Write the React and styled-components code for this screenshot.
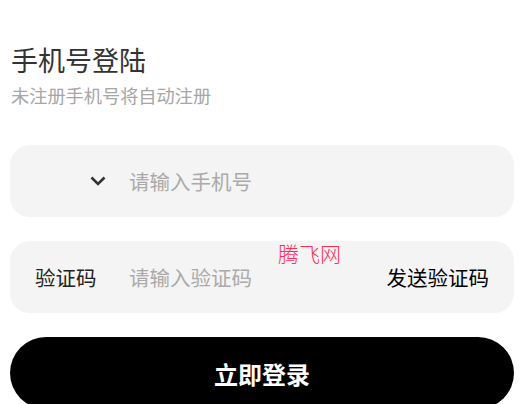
import React from 'react';
import styled, { createGlobalStyle } from 'styled-components';

const GlobalStyle = createGlobalStyle`
    body {
        margin: 0;
        background: #fff;
        font-family: "Noto Sans CJK SC", "Noto Sans", sans-serif;
    }
`

const Page = styled.div`
    padding: 42px 9px 0 10px;
    display: flex;
    flex-direction: column;
`

const Title = styled.h1`
    margin: 0;
    font-size: 27px;
    line-height: 36px;
    font-weight: 400;
    color: #333;
    padding-left: 1px;
`

const Subtitle = styled.p`
    margin: 4px 0 0;
    font-size: 18.2px;
    line-height: 26px;
    color: #a6a6a6;
    padding-left: 1px;
`

const Field = styled.div`
    position: relative;
    display: flex;
    align-items: center;
    height: 72px;
    margin-top: ${p => p.$top}px;
    background: #f4f4f4;
    border-radius: 20px;
`

const Lead = styled.div`
    width: 119px;
    flex-shrink: 0;
    display: flex;
    align-items: center;
    justify-content: ${p => p.$right ? 'flex-end' : 'flex-start'};
    padding: ${p => p.$right ? '0 23px 0 0' : '0 0 0 25px'};
    box-sizing: border-box;
    font-size: 20.5px;
    color: #222;
`

const Input = styled.input`
    flex: 1;
    min-width: 0;
    border: none;
    outline: none;
    background: transparent;
    font-family: inherit;
    font-size: 20.5px;
    color: #333;
    padding: 0;
    &::placeholder {
        color: #aaa;
    }
`

const SendCode = styled.span`
    padding-right: 25px;
    font-size: 20.5px;
    color: #000;
`

const Watermark = styled.span`
    position: absolute;
    left: 268px;
    top: -2px;
    font-size: 21px;
    line-height: 28px;
    font-weight: 300;
    color: #ff2d55;
`

const Submit = styled.button`
    margin-top: 24px;
    height: 72px;
    border: none;
    border-radius: 36px;
    background: #000;
    color: #fff;
    font-family: inherit;
    font-size: 24px;
    font-weight: 700;
    cursor: pointer;
`

export default function App() {
    return (
        <Page>
            <GlobalStyle />
            <Title>手机号登陆</Title>
            <Subtitle>未注册手机号将自动注册</Subtitle>
            <Field $top={37}>
                <Lead $right>
                    <svg width="16" height="10" viewBox="0 0 16 10">
                        <path d="M1.5 1.5l6.5 6.5 6.5-6.5" fill="none" stroke="#333" strokeWidth="2.6" />
                    </svg>
                </Lead>
                <Input placeholder="请输入手机号" />
            </Field>
            <Field $top={24}>
                <Lead>验证码</Lead>
                <Input placeholder="请输入验证码" />
                <SendCode>发送验证码</SendCode>
                <Watermark>腾飞网</Watermark>
            </Field>
            <Submit>立即登录</Submit>
        </Page>
    );
}
